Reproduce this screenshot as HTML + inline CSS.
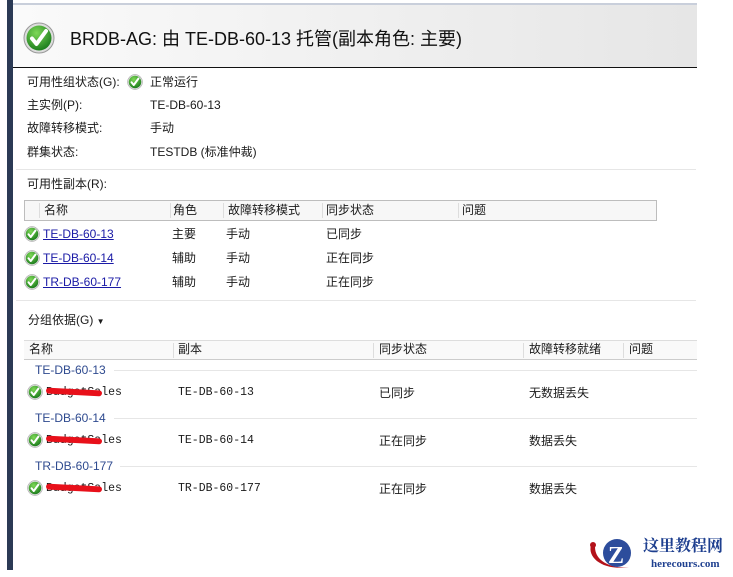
<!DOCTYPE html>
<html><head><meta charset="utf-8"><style>
*{margin:0;padding:0;box-sizing:border-box}
body{width:733px;height:577px;background:#fff;position:relative;overflow:hidden;font-family:"Liberation Sans","Noto Sans CJK SC",sans-serif;font-size:12px;line-height:16px;color:#1a1a1a}
.a{position:absolute;white-space:nowrap}
.bar{left:7px;top:0;width:6px;height:570px;background:#2b3a55}
.hdr{left:13px;top:3px;width:684px;height:65px;background:linear-gradient(90deg,#fafafa,#e6e6e6);border-top:2px solid #c9cfdb;border-bottom:1.5px solid #111}
.title{left:70px;top:27px;font-size:18px;line-height:24px;color:#111}
.sep{height:1px;background:#e6e6e6}
.th{background:#f7f7f7;border:1px solid #bdbdbd}
.cd{position:absolute;top:2px;width:1px;height:15px;background:#ddd}
a{color:#1a1aa6;text-decoration:underline}
.mono{font-family:"Liberation Mono","Noto Sans CJK SC",monospace;font-size:11.5px}
.grp{color:#2e4a8f;font-size:12px}
.red{background:#e8101a;height:6px;border-radius:3px;transform:rotate(3deg)}
</style></head><body>
<svg width="0" height="0" style="position:absolute"><defs>
<radialGradient id="g" cx="40%" cy="30%" r="70%"><stop offset="0" stop-color="#7ed957"/><stop offset="1" stop-color="#1e7f1e"/></radialGradient>
<symbol id="ck" viewBox="0 0 32 32"><circle cx="16" cy="16" r="15" fill="#ddd" stroke="#999"/><circle cx="16" cy="16" r="12.5" fill="url(#g)"/><path d="M9 16.5l4.5 5.5L23 9" fill="none" stroke="#fff" stroke-width="4" stroke-linecap="round" stroke-linejoin="round"/></symbol>
</defs></svg>
<div class="a bar"></div>
<div class="a hdr"></div>
<svg class="a" style="left:23px;top:22px" width="32" height="32"><use href="#ck"/></svg>
<div class="a title">BRDB-AG: 由 TE-DB-60-13 托管(副本角色: 主要)</div>

<div class="a" style="left:27px;top:74px">可用性组状态(G):</div>
<svg class="a" style="left:127px;top:74px" width="16" height="16"><use href="#ck"/></svg>
<div class="a" style="left:150px;top:74px">正常运行</div>
<div class="a" style="left:27px;top:97px">主实例(P):</div><div class="a" style="left:150px;top:97px">TE-DB-60-13</div>
<div class="a" style="left:27px;top:120px">故障转移模式:</div><div class="a" style="left:150px;top:120px">手动</div>
<div class="a" style="left:27px;top:144px">群集状态:</div><div class="a" style="left:150px;top:144px">TESTDB (标准仲裁)</div>
<div class="a sep" style="left:16px;top:169px;width:680px"></div>
<div class="a" style="left:27px;top:176px">可用性副本(R):</div>

<div class="a th" style="left:24px;top:200px;width:633px;height:21px">
<div class="cd" style="left:14px"></div><div class="cd" style="left:145px"></div><div class="cd" style="left:198px"></div><div class="cd" style="left:297px"></div><div class="cd" style="left:433px"></div></div>
<div class="a" style="left:44px;top:202px">名称</div><div class="a" style="left:173px;top:202px">角色</div><div class="a" style="left:228px;top:202px">故障转移模式</div><div class="a" style="left:326px;top:202px">同步状态</div><div class="a" style="left:462px;top:202px">问题</div>

<svg class="a" style="left:24px;top:226px" width="16" height="16"><use href="#ck"/></svg>
<div class="a" style="left:43px;top:226px"><a>TE-DB-60-13</a></div><div class="a" style="left:172px;top:226px">主要</div><div class="a" style="left:226px;top:226px">手动</div><div class="a" style="left:326px;top:226px">已同步</div>
<svg class="a" style="left:24px;top:250px" width="16" height="16"><use href="#ck"/></svg>
<div class="a" style="left:43px;top:250px"><a>TE-DB-60-14</a></div><div class="a" style="left:172px;top:250px">辅助</div><div class="a" style="left:226px;top:250px">手动</div><div class="a" style="left:326px;top:250px">正在同步</div>
<svg class="a" style="left:24px;top:274px" width="16" height="16"><use href="#ck"/></svg>
<div class="a" style="left:43px;top:274px"><a>TR-DB-60-177</a></div><div class="a" style="left:172px;top:274px">辅助</div><div class="a" style="left:226px;top:274px">手动</div><div class="a" style="left:326px;top:274px">正在同步</div>
<div class="a sep" style="left:16px;top:300px;width:680px"></div>

<div class="a" style="left:28px;top:312px">分组依据(G) <span style="font-size:8px">▼</span></div>

<div class="a" style="left:24px;top:340px;width:673px;height:20px;background:#f9f9f9;border-top:1px solid #ddd;border-bottom:1px solid #ccc">
<div class="cd" style="left:149px"></div><div class="cd" style="left:349px"></div><div class="cd" style="left:499px"></div><div class="cd" style="left:599px"></div></div>
<div class="a" style="left:29px;top:341px">名称</div><div class="a" style="left:178px;top:341px">副本</div><div class="a" style="left:379px;top:341px">同步状态</div><div class="a" style="left:529px;top:341px">故障转移就绪</div><div class="a" style="left:629px;top:341px">问题</div>

<div class="a grp" style="left:35px;top:362px">TE-DB-60-13</div><div class="a sep" style="left:114px;top:370px;width:583px"></div>
<svg class="a" style="left:27px;top:384px" width="16" height="16"><use href="#ck"/></svg>
<div class="a mono" style="left:46px;top:385px">BudgetSales</div><div class="a red" style="left:46px;top:389px;width:56px"></div>
<div class="a mono" style="left:178px;top:385px">TE-DB-60-13</div><div class="a" style="left:379px;top:385px">已同步</div><div class="a" style="left:529px;top:385px">无数据丢失</div>

<div class="a grp" style="left:35px;top:410px">TE-DB-60-14</div><div class="a sep" style="left:114px;top:418px;width:583px"></div>
<svg class="a" style="left:27px;top:432px" width="16" height="16"><use href="#ck"/></svg>
<div class="a mono" style="left:46px;top:433px">BudgetSales</div><div class="a red" style="left:46px;top:437px;width:56px"></div>
<div class="a mono" style="left:178px;top:433px">TE-DB-60-14</div><div class="a" style="left:379px;top:433px">正在同步</div><div class="a" style="left:529px;top:433px">数据丢失</div>

<div class="a grp" style="left:35px;top:458px">TR-DB-60-177</div><div class="a sep" style="left:120px;top:466px;width:577px"></div>
<svg class="a" style="left:27px;top:480px" width="16" height="16"><use href="#ck"/></svg>
<div class="a mono" style="left:46px;top:481px">BudgetSales</div><div class="a red" style="left:46px;top:485px;width:56px"></div>
<div class="a mono" style="left:178px;top:481px">TR-DB-60-177</div><div class="a" style="left:379px;top:481px">正在同步</div><div class="a" style="left:529px;top:481px">数据丢失</div>

<svg class="a" style="left:585px;top:533px" width="60" height="42">
<path d="M6 12 C2 26 20 38 44 34 C30 36 10 30 10 14Z" fill="#b3121a"/>
<circle cx="8" cy="12" r="3" fill="#b3121a"/>
<circle cx="32" cy="20" r="14" fill="#2d4d9c"/>
<text x="23" y="30" font-family="Liberation Serif,serif" font-weight="bold" font-size="24" fill="#fff">Z</text>
</svg>
<div class="a" style="left:643px;top:535px;font-family:'Noto Serif CJK SC',serif;font-weight:bold;font-size:16px;line-height:20px;color:#1e3f8f">这里教程网</div>
<div class="a" style="left:651px;top:556px;font-family:'Liberation Serif',serif;font-weight:bold;font-size:11px;color:#1e3f8f">herecours.com</div>
</body></html>
